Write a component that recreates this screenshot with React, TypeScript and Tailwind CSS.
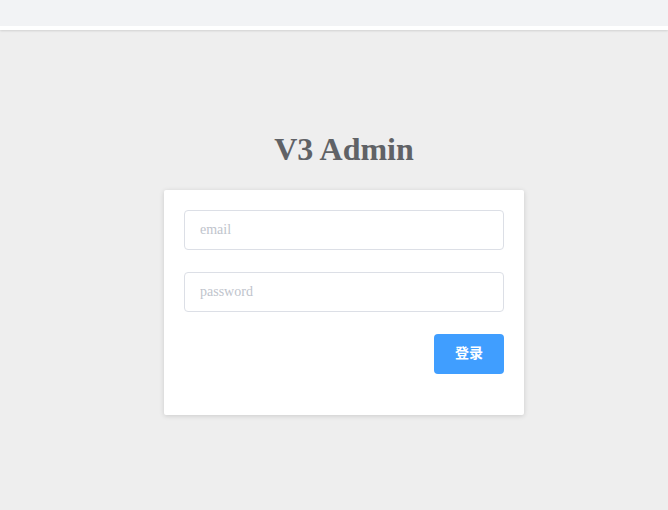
export default function App() {
  return (
    <div className="min-h-screen flex flex-col bg-[#eeeeee] font-['Liberation_Serif','Noto_Sans_CJK_SC',serif]">
      <div className="h-[30px] bg-white shadow-[0_1px_2px_rgba(0,0,0,0.12)]">
        <div className="h-[26px] bg-[#f2f3f5]" />
      </div>
      <div className="flex-grow flex flex-col items-center pl-[20px] pt-[100px]">
        <h1 className="text-[32px] leading-[38px] font-bold text-[#606266] mb-[22px]">V3 Admin</h1>
        <div className="w-[360px] bg-white rounded-[2px] px-5 pt-5 pb-[41px] shadow-[0_1px_5px_rgba(0,0,0,0.15)]">
          <input
            type="text"
            placeholder="email"
            className="block w-full h-10 px-[15px] mb-[22px] border border-[#dcdfe6] rounded text-sm text-[#606266] placeholder:text-[#c0c4cc] outline-none"
          />
          <input
            type="password"
            placeholder="password"
            className="block w-full h-10 px-[15px] mb-[22px] border border-[#dcdfe6] rounded text-sm text-[#606266] placeholder:text-[#c0c4cc] outline-none"
          />
          <div className="flex justify-end">
            <button className="w-[70px] h-10 bg-[#409eff] rounded text-white text-sm font-bold">登录</button>
          </div>
        </div>
      </div>
    </div>
  )
}
